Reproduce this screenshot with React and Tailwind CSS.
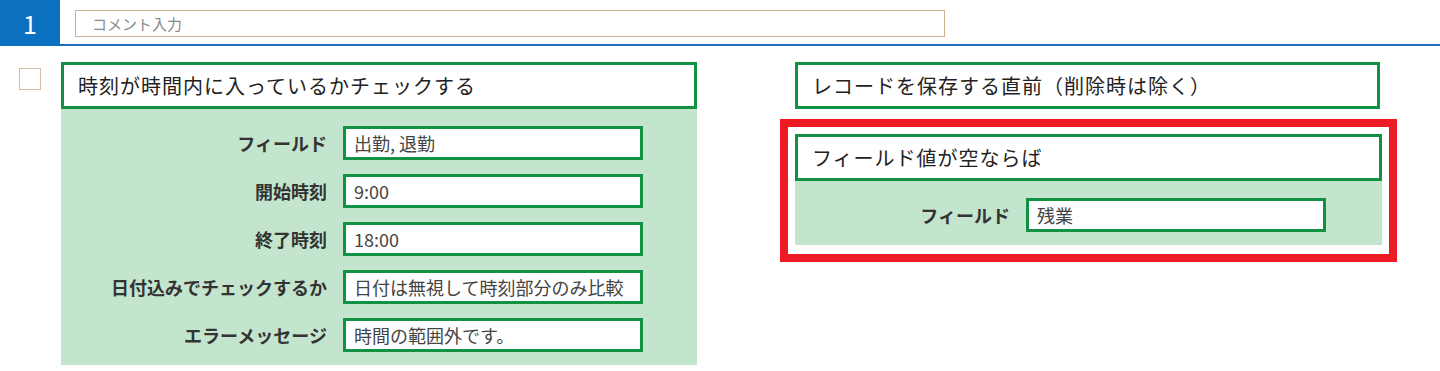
const font = { fontFamily: '"Noto Sans CJK JP", "Noto Sans", sans-serif' };

const Field = ({ label, value, labelWidth }) => (
    <div className="flex items-center">
        <div
            className="text-right text-[18px] font-bold text-[#333] leading-none shrink-0"
            style={{ width: labelWidth }}
        >
            {label}
        </div>
        <div className="ml-[16px] w-[300px] h-[34px] border-[3px] border-[#129143] bg-white flex items-center pl-[8px] text-[18px] text-[#444] leading-none">
            {value}
        </div>
    </div>
);

const Heading = ({ children }) => (
    <div className="h-[47px] border-[3px] border-[#129143] bg-white flex items-center pl-[14px] text-[20px] tracking-[1px] text-[#222] leading-none">
        {children}
    </div>
);

export default function App() {
    const fields = [
        ['フィールド', '出勤, 退勤'],
        ['開始時刻', '9:00'],
        ['終了時刻', '18:00'],
        ['日付込みでチェックするか', '日付は無視して時刻部分のみ比較'],
        ['エラーメッセージ', '時間の範囲外です。'],
    ];

    return (
        <div className="w-[1440px] h-[371px] bg-white overflow-hidden" style={font}>
            {/* rule header */}
            <div className="flex h-[46px] border-b-2 border-[#1b6db8]">
                <div className="w-[60px] h-[46px] -mb-[2px] bg-[#0b70c0] text-white text-[25px] flex items-center justify-center leading-none">
                    1
                </div>
                <div className="ml-[15px] mt-[10px] w-[870px] h-[27px] border border-[#cdb08f] flex items-center pl-[16px] text-[15px] text-[#8a8a8a] leading-none">
                    コメント入力
                </div>
            </div>

            <div className="flex pt-[16px]">
                {/* checkbox */}
                <div className="ml-[19px] mt-[6px] w-[22px] h-[22px] border border-[#d4c0a8] bg-white shrink-0" />

                {/* left: condition */}
                <div className="ml-[20px] w-[636px]">
                    <Heading>時刻が時間内に入っているかチェックする</Heading>
                    <div className="bg-[#c3e5cd] pt-[17px] pb-[13px] flex flex-col gap-[14px]">
                        {fields.map(([label, value], index) => (
                            <Field key={index} label={label} value={value} labelWidth="266px" />
                        ))}
                    </div>
                </div>

                {/* right: timing + action */}
                <div className="ml-[83px] w-[617px]">
                    <div className="ml-[15px] w-[585px]">
                        <Heading>レコードを保存する直前（削除時は除く）</Heading>
                    </div>
                    <div className="mt-[10px] border-[8px] border-[#ed1c24] px-[7px] pt-[7px] pb-[9px]">
                        <Heading>フィールド値が空ならば</Heading>
                        <div className="bg-[#c3e5cd] pt-[17px] pb-[13px]">
                            <Field label="フィールド" value="残業" labelWidth="215px" />
                        </div>
                    </div>
                </div>
            </div>
        </div>
    );
}
